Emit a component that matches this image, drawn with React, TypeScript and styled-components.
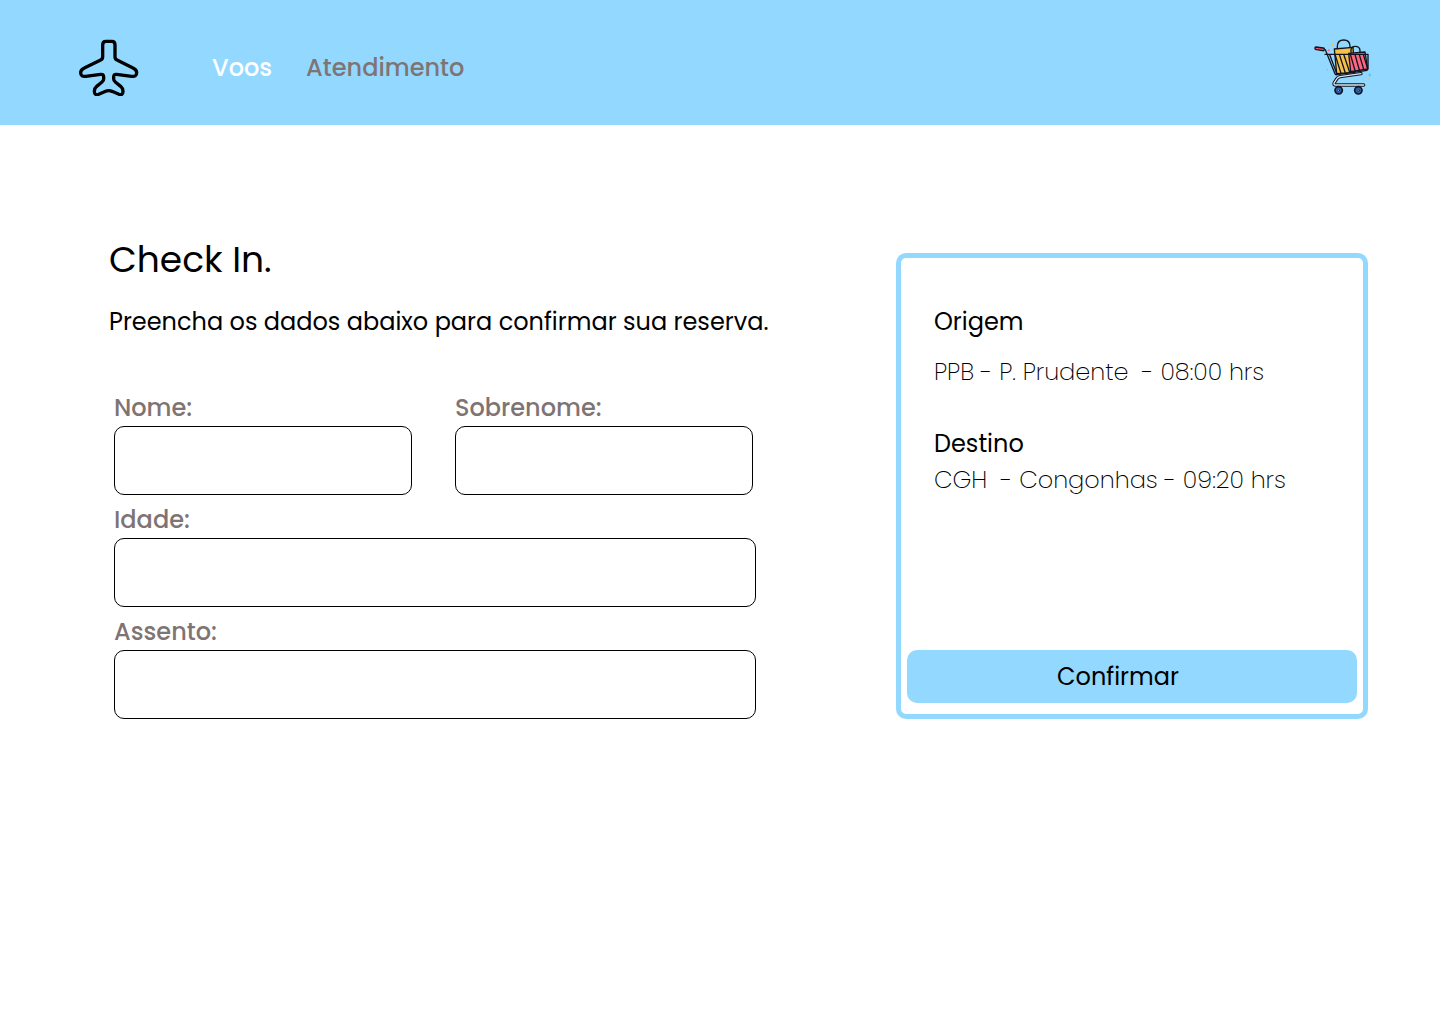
import React from "react";
import styled, { createGlobalStyle } from "styled-components";

const sky = "#93d8ff";
const muted = "#7f7474";

const GlobalStyle = createGlobalStyle`
  *, *::before, *::after { box-sizing: border-box; }
  body {
    margin: 0;
    background: #ffffff;
    color: #000000;
    font-family: Poppins, Inter, "Open Sans", sans-serif;
    font-size: 24px;
    line-height: 36px;
  }
`;

const Header = styled.header`
  display: flex;
  align-items: center;
  min-height: 125px;
  padding: 10px 69px 0 79px;
  background: ${sky};
`;

const IconLink = styled.a`
  display: block;
  color: #000000;
  svg { display: block; }
`;

const Nav = styled.nav`
  display: flex;
  flex: 1;
  gap: 34px;
  margin-left: 73px;
`;

const NavLink = styled.a<{ $active?: boolean }>`
  color: ${(p) => (p.$active ? "#ffffff" : muted)};
  font-weight: 500;
  text-decoration: none;
`;

const Main = styled.main`
  display: flex;
  justify-content: space-between;
  gap: 48px;
  padding: 108px 72px 48px 109px;
`;

const Booking = styled.section`
  flex: 0 1 661px;
`;

const Title = styled.h1`
  margin: 0 0 17px;
  font-size: 36px;
  font-weight: 400;
  line-height: 54px;
`;

const Intro = styled.p`
  margin: 0 0 50px;
`;

const Form = styled.form`
  display: grid;
  gap: 7px;
  padding: 0 14px 0 5px;
`;

const NameRow = styled.div`
  display: grid;
  grid-template-columns: 1fr 1fr;
  gap: 43px;
  padding-right: 3px;
`;

const Field = styled.div`
  display: flex;
  flex-direction: column;
  min-width: 0;
`;

const Label = styled.label`
  color: ${muted};
  font-weight: 500;
`;

const Input = styled.input`
  width: 100%;
  height: 69px;
  padding: 0 16px;
  border: 1px solid #000000;
  border-radius: 10px;
  background: #ffffff;
  font: inherit;
`;

const Card = styled.aside`
  display: flex;
  flex: 0 1 472px;
  flex-direction: column;
  justify-content: space-between;
  margin-top: 20px;
  padding: 46px 6px 11px;
  border: 5px solid ${sky};
  border-radius: 10px;
`;

const Trip = styled.dl`
  margin: 0;
  padding: 0 27px;
`;

const Stop = styled.div<{ $gap?: number }>`
  display: grid;
  gap: ${(p) => p.$gap ?? 0}px;
  & + & { margin-top: 36px; }
`;

const StopName = styled.dt`
  font-weight: 400;
`;

const StopDetail = styled.dd`
  margin: 0;
  font-weight: 275;
  white-space: pre-wrap;
`;

const Confirm = styled.button`
  height: 53px;
  padding: 0 28px 0 0;
  border: 0;
  border-radius: 10px;
  background: ${sky};
  color: #000000;
  font: inherit;
  cursor: pointer;
`;

const PlaneIcon = () => (
  <svg width="60" height="57" viewBox="27 27 180 171" fill="none" stroke="currentColor" strokeWidth="10" strokeLinejoin="round" aria-hidden="true">
    <path d="M98 45Q98 34 108 34H126Q135 34 135 45V80Q135 87 141 90L189 114Q200 119 200 128Q200 141 185 139L140 133Q131 132 131 141V147Q131 152 136 156L152 169Q159 175 159 184Q159 197 147 193L126 184Q116 180 107 184L86 193Q73 197 73 184Q73 175 80 169L96 156Q101 152 101 147V141Q101 132 92 133L47 139Q32 141 32 128Q32 119 43 114L92 90Q98 87 98 80Z" />
  </svg>
);

const CartIcon = () => (
  <svg width="57" height="57" viewBox="29 26 171 171" fill="none" stroke="#10151f" strokeWidth="4" strokeLinecap="round" strokeLinejoin="round" aria-hidden="true">
    <g stroke="none">
      <circle cx="85" cy="44" r="4" fill="#f5c14b" />
      <circle cx="73" cy="60" r="3" fill="#ff6480" />
      <circle cx="69" cy="118" r="2" fill="#77c78a" />
      <circle cx="193" cy="146" r="2" fill="#d9c37c" />
      <path d="M197 127L199 132L204 134L199 136L197 141L195 136L190 134L195 132Z" fill="#5bc8f5" />
    </g>
    <path d="M99 55V48Q99 29 118 29Q137 29 137 48V52" />
    <path d="M90 56L146 51L151 126L97 130Z" fill="#f5c14b" />
    <path d="M140 67V58Q141 48 153 48Q166 48 167 60V66" />
    <path d="M133 69L182 65L190 116L139 124Z" fill="#ff6480" />
    <path d="M62 72H191V113Q191 120 184 121L98 133Q93 134 91 128L63 58" />
    <path d="M76 73L98 132M93 75L110 129M106 75L123 128M119 75L136 126M139 75L153 124M152 73L166 122M165 73L179 120M177 73L189 112" strokeWidth="4" />
    <path d="M170 130L107 139Q101 140 97 146L90 157Q86 164 95 164H178" strokeWidth="10" />
    <path d="M170 130L107 139Q101 140 97 146L90 157Q86 164 95 164H178" stroke="#dce9f5" strokeWidth="4" />
    <path d="M35 50L57 53Q61 54 60 58Q59 62 55 61L36 58Q31 57 32 53Q32 50 35 50Z" fill="#f04f61" />
    <g fill="#2e5fae" strokeWidth="5">
      <circle cx="103" cy="180" r="11" />
      <circle cx="162" cy="180" r="11" />
    </g>
    <g fill="#b8d9f5" strokeWidth="2">
      <circle cx="103" cy="180" r="3" />
      <circle cx="162" cy="180" r="3" />
    </g>
  </svg>
);

type TextFieldProps = { id: string; label: string };

const TextField = ({ id, label }: TextFieldProps) => (
  <Field>
    <Label htmlFor={id}>{label}</Label>
    <Input id={id} name={id} type="text" />
  </Field>
);

export default function App() {
  return (
    <>
      <GlobalStyle />
      <Header>
        <IconLink href="#inicio" aria-label="Início">
          <PlaneIcon />
        </IconLink>
        <Nav>
          <NavLink href="#voos" $active>Voos</NavLink>
          <NavLink href="#atendimento">Atendimento</NavLink>
        </Nav>
        <IconLink href="#carrinho" aria-label="Carrinho">
          <CartIcon />
        </IconLink>
      </Header>
      <Main>
        <Booking>
          <Title>Check In.</Title>
          <Intro>Preencha os dados abaixo para confirmar sua reserva.</Intro>
          <Form id="checkin" onSubmit={(e) => e.preventDefault()}>
            <NameRow>
              <TextField id="nome" label="Nome:" />
              <TextField id="sobrenome" label="Sobrenome:" />
            </NameRow>
            <TextField id="idade" label="Idade:" />
            <TextField id="assento" label="Assento:" />
          </Form>
        </Booking>
        <Card>
          <Trip>
            <Stop $gap={14}>
              <StopName>Origem</StopName>
              <StopDetail>{"PPB - P. Prudente  - 08:00 hrs"}</StopDetail>
            </Stop>
            <Stop>
              <StopName>Destino</StopName>
              <StopDetail>{"CGH  - Congonhas - 09:20 hrs"}</StopDetail>
            </Stop>
          </Trip>
          <Confirm type="submit" form="checkin">Confirmar</Confirm>
        </Card>
      </Main>
    </>
  );
}
